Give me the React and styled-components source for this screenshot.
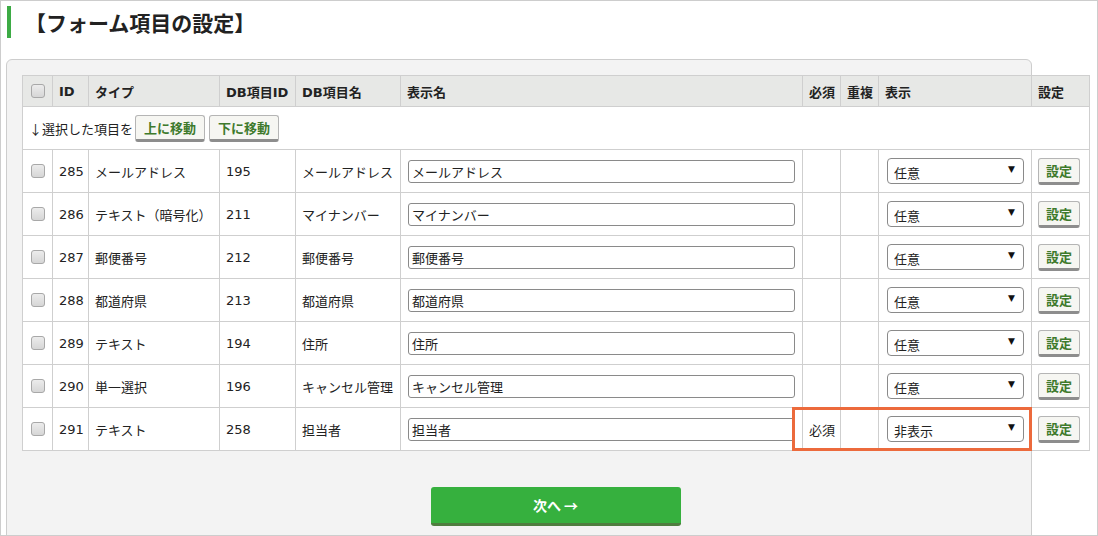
import React from 'react';
import styled, {createGlobalStyle} from 'styled-components';

const GlobalStyle = createGlobalStyle`
  html, body {
    margin: 0;
    padding: 0;
    background: #fff;
  }
  body {
    font-family: 'DejaVu Sans', 'Noto Sans CJK JP', sans-serif;
    color: #333;
  }
`;

const Frame = styled.div`
  width: 1098px;
  height: 536px;
  box-sizing: border-box;
  border: 1px solid #cdcdcd;
  overflow: hidden;
  background: #fff;
`;

const TitleBar = styled.h1`
  margin: 5px 0 0 6px;
  height: 32px;
  border-left: 4px solid #3dab45;
  padding-left: 14px;
  display: flex;
  align-items: center;
  font-family: 'Noto Sans CJK JP', sans-serif;
  font-size: 21px;
  font-weight: 700;
  color: #222;
  letter-spacing: 0;
`;

const Panel = styled.div`
  margin: 21px 0 0 5px;
  width: 1026px;
  height: 600px;
  box-sizing: border-box;
  border: 1px solid #cdcdcd;
  border-radius: 6px 6px 0 0;
  background: #f3f3f3;
  padding: 15px;
`;

const TableWrap = styled.div`
  position: relative;
  width: 1067px;
`;

const Table = styled.table`
  width: 1067px;
  table-layout: fixed;
  border-collapse: collapse;
  background: #fff;
  font-size: 13px;
`;

const Th = styled.th`
  height: 30px;
  padding: 0 6px;
  border: 1px solid #cfcfcf;
  background: #e7e8e6;
  text-align: ${({center}) => (center ? 'center' : 'left')};
  font-weight: 700;
  font-size: 13px;
  color: #222;
  white-space: nowrap;
`;

const Td = styled.td`
  height: 42px;
  padding: 0 ${({pad}) => pad || 6}px;
  border: 1px solid #cfcfcf;
  text-align: ${({center}) => (center ? 'center' : 'left')};
  vertical-align: middle;
  white-space: nowrap;
  color: #222;
`;

const Check = styled.input.attrs({type: 'checkbox'})`
  appearance: none;
  display: block;
  margin: 0 auto;
  width: 14px;
  height: 14px;
  border: 1px solid #a8a8a8;
  border-radius: 3px;
  background: linear-gradient(#ececec, #d6d6d6);
  box-sizing: border-box;
`;

const MoveCell = styled.td`
  height: 42px;
  padding: 0 6px;
  border: 1px solid #cfcfcf;
  white-space: nowrap;
`;

const MoveLine = styled.div`
  display: flex;
  align-items: center;
  gap: 4px;
  font-family: 'Noto Sans CJK JP', sans-serif;
  font-size: 13px;
  color: #222;
`;

const MoveLabel = styled.span`
  margin-right: -2px;
`;

const GreyButton = styled.button`
  height: 27px;
  padding: 0 ${({wide}) => (wide ? 8 : 7)}px;
  border: 1px solid #b5b5b5;
  border-bottom: 3px solid #8d8d8d;
  border-radius: 3px;
  background: #f6f6f2;
  font-family: 'Noto Sans CJK JP', sans-serif;
  font-size: 13px;
  font-weight: 700;
  color: #3e7a2c;
  line-height: 1;
  box-sizing: border-box;
  cursor: pointer;
`;

const NameInput = styled.input.attrs({type: 'text'})`
  display: block;
  width: 100%;
  height: 23px;
  box-sizing: border-box;
  border: 1px solid #8a8a8a;
  border-radius: 3px;
  padding: 0 3px;
  font-family: 'Noto Sans CJK JP', sans-serif;
  font-size: 13px;
  color: #222;
  background: #fff;
`;

const SelectBox = styled.div`
  position: relative;
  width: 137px;
  margin-left: 2px;
`;

const Select = styled.select`
  appearance: none;
  display: block;
  width: 100%;
  height: 26px;
  box-sizing: border-box;
  border: 1px solid #8a8a8a;
  border-radius: 4px;
  padding: 3px 6px 0;
  font-family: 'Noto Sans CJK JP', sans-serif;
  font-size: 13px;
  color: #222;
  background: #fff;
`;

const Arrow = styled.span`
  position: absolute;
  right: 9px;
  top: 6px;
  font-size: 9px;
  color: #111;
  pointer-events: none;
`;

const Highlight = styled.div`
  position: absolute;
  left: 770px;
  top: 332px;
  width: 240px;
  height: 44px;
  box-sizing: border-box;
  border: 3px solid #ec6a3c;
  pointer-events: none;
`;

const Footer = styled.div`
  width: 1067px;
  display: flex;
  justify-content: center;
  padding-top: 36px;
`;

const NextButton = styled.button`
  width: 250px;
  height: 39px;
  border: none;
  border-bottom: 3px solid #4f7d3f;
  border-radius: 3px;
  background: #36b03e;
  color: #fff;
  font-family: 'Noto Sans CJK JP', sans-serif;
  font-size: 14px;
  font-weight: 700;
  cursor: pointer;
`;

const cols = [30, 36, 131, 76, 105, 402, 38, 38, 153, 58];

const rows = [
  {id: 285, type: 'メールアドレス', dbId: 195, dbName: 'メールアドレス', label: 'メールアドレス', required: '', view: '任意'},
  {id: 286, type: 'テキスト（暗号化）', dbId: 211, dbName: 'マイナンバー', label: 'マイナンバー', required: '', view: '任意'},
  {id: 287, type: '郵便番号', dbId: 212, dbName: '郵便番号', label: '郵便番号', required: '', view: '任意'},
  {id: 288, type: '都道府県', dbId: 213, dbName: '都道府県', label: '都道府県', required: '', view: '任意'},
  {id: 289, type: 'テキスト', dbId: 194, dbName: '住所', label: '住所', required: '', view: '任意'},
  {id: 290, type: '単一選択', dbId: 196, dbName: 'キャンセル管理', label: 'キャンセル管理', required: '', view: '任意'},
  {id: 291, type: 'テキスト', dbId: 258, dbName: '担当者', label: '担当者', required: '必須', view: '非表示'},
];

const Row = ({row}) => (
  <tr>
    <Td center>
      <Check />
    </Td>
    <Td>{row.id}</Td>
    <Td>{row.type}</Td>
    <Td>{row.dbId}</Td>
    <Td>{row.dbName}</Td>
    <Td pad={7}>
      <NameInput defaultValue={row.label} />
    </Td>
    <Td>{row.required}</Td>
    <Td />
    <Td>
      <SelectBox>
        <Select defaultValue={row.view}>
          <option>任意</option>
          <option>必須</option>
          <option>非表示</option>
        </Select>
        <Arrow>▼</Arrow>
      </SelectBox>
    </Td>
    <Td pad={6}>
      <GreyButton>設定</GreyButton>
    </Td>
  </tr>
);

const App = () => (
  <>
    <GlobalStyle />
    <Frame>
      <TitleBar>【フォーム項目の設定】</TitleBar>
      <Panel>
        <TableWrap>
          <Table>
            <colgroup>
              {cols.map((w, i) => (
                <col key={i} style={{width: w}} />
              ))}
            </colgroup>
            <thead>
              <tr>
                <Th center>
                  <Check />
                </Th>
                <Th>ID</Th>
                <Th>タイプ</Th>
                <Th>DB項目ID</Th>
                <Th>DB項目名</Th>
                <Th>表示名</Th>
                <Th>必須</Th>
                <Th>重複</Th>
                <Th>表示</Th>
                <Th>設定</Th>
              </tr>
            </thead>
            <tbody>
              <tr>
                <MoveCell colSpan={10}>
                  <MoveLine>
                    <MoveLabel>↓選択した項目を</MoveLabel>
                    <GreyButton wide>上に移動</GreyButton>
                    <GreyButton wide>下に移動</GreyButton>
                  </MoveLine>
                </MoveCell>
              </tr>
              {rows.map((row) => (
                <Row key={row.id} row={row} />
              ))}
            </tbody>
          </Table>
          <Highlight />
        </TableWrap>
        <Footer>
          <NextButton>次へ →</NextButton>
        </Footer>
      </Panel>
    </Frame>
  </>
);

export default App;
